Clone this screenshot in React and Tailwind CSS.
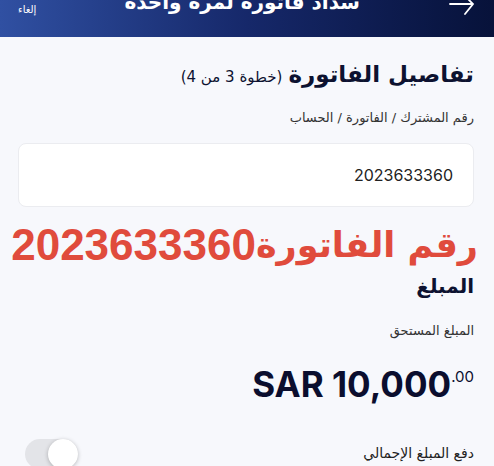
import React from 'react';

const arabic = { fontFamily: '"DejaVu Sans", "Noto Sans", sans-serif' };

const Header = () => (
  <div className="relative h-[37px] overflow-hidden bg-gradient-to-l from-[#07123a] via-[#16286a] to-[#3050a2] text-white">
    <div className="flex items-start justify-between pl-[18px] pr-[18px]">
      <svg width="28" height="18" viewBox="0 0 28 18" fill="none" stroke="white" strokeWidth="1.8" strokeLinecap="round">
        <path d="M2 4 H25 M17 -4 L25 4 L17 14" />
      </svg>
      <span className="-mt-[13px] text-[20px] font-bold" style={arabic}>
        سداد فاتورة لمرة واحدة
      </span>
      <span className="mt-[2px] text-[10px]" style={arabic}>
        إلغاء
      </span>
    </div>
  </div>
);

const Toggle = () => (
  <div className="relative h-[30px] w-[53px] rounded-full bg-[#e3e4e8]">
    <div className="absolute right-0 top-0 h-[30px] w-[30px] rounded-full bg-white shadow-[0_1px_4px_rgba(0,0,0,0.25)]" />
  </div>
);

export default function App() {
  return (
    <div dir="rtl" className="h-[466px] w-[494px] overflow-hidden bg-[#f7f8fc]">
      <Header />

      <div className="px-[20px] pl-[18px]">
        <div className="mt-[20px] flex items-baseline gap-[6px] text-[#0d1230]" style={arabic}>
          <span className="text-[23px] font-bold">تفاصيل الفاتورة</span>
          <span className="text-[15px]">(خطوة 3 من 4)</span>
        </div>

        <div className="mt-[16px] text-[13px] text-[#333]" style={arabic}>
          رقم المشترك / الفاتورة / الحساب
        </div>

        <div className="mt-[16px] flex h-[64px] items-center rounded-[8px] border border-[#ebecf0] bg-white px-[20px]">
          <span className="text-[16px] text-[#222]" style={{ fontFamily: 'Inter, "Liberation Sans", sans-serif' }}>
            2023633360
          </span>
        </div>

        <div className="-mr-[4px] mt-[10px] flex h-[56px] items-center whitespace-nowrap font-bold text-[#e04b3c]">
          <span className="text-[35px] leading-none" style={arabic}>
            رقم الفاتورة
          </span>
          <span className="text-[44px] leading-none" style={{ fontFamily: '"Liberation Sans", sans-serif' }}>
            2023633360
          </span>
        </div>

        <div className="-mt-[2px] text-[20px] font-bold text-[#0d1230]" style={arabic}>
          المبلغ
        </div>

        <div className="mt-[20px] text-[13px] text-[#333]" style={arabic}>
          المبلغ المستحق
        </div>

        <div dir="ltr" className="mt-[22px] flex justify-end text-[#0b0e2e]" style={{ fontFamily: 'Inter, "Liberation Sans", sans-serif' }}>
          <span className="text-[35px] font-bold leading-[42px]">SAR 10,000</span>
          <span className="mt-[4px] text-[15px] leading-[20px]">.00</span>
        </div>

        <div className="mt-[34px] flex items-center justify-between">
          <span className="text-[14px] text-[#222]" style={arabic}>
            دفع المبلغ الإجمالي
          </span>
          <div className="ml-[7px]">
            <Toggle />
          </div>
        </div>
      </div>
    </div>
  );
}
